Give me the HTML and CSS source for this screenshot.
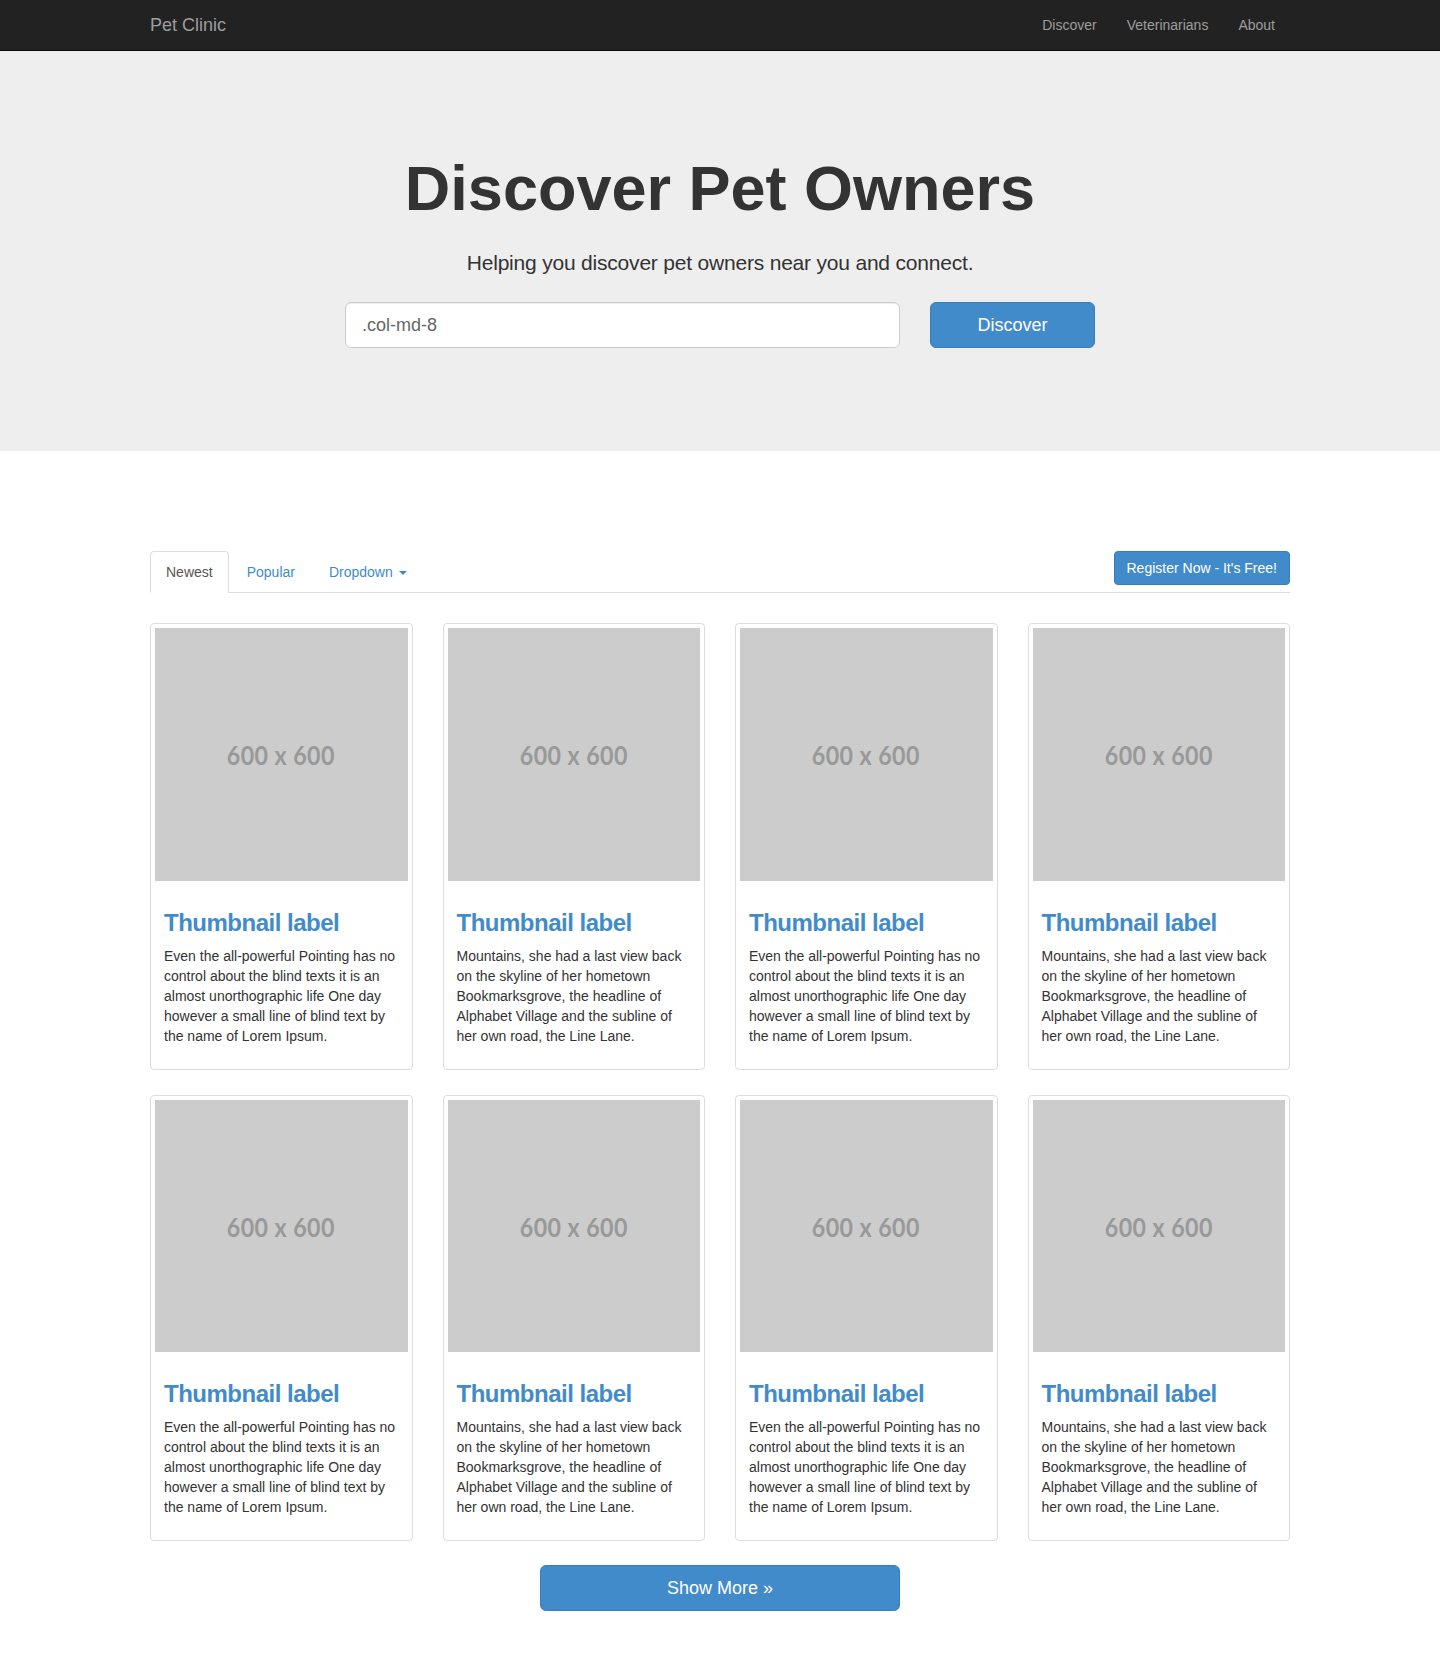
FILE: index.html
```html
<!DOCTYPE html>
<html lang="en">
<head>
<meta charset="utf-8">
<title>Pet Clinic</title>
<link rel="stylesheet" href="styles.css">
</head>
<body>
<nav class="navbar">
  <div class="container navbar-inner">
    <a class="brand" href="#">Pet Clinic</a>
    <ul class="nav-links">
      <li><a href="#">Discover</a></li>
      <li><a href="#">Veterinarians</a></li>
      <li><a href="#">About</a></li>
    </ul>
  </div>
</nav>

<header class="jumbotron">
  <div class="container hero">
    <h1 class="hero-title">Discover Pet Owners</h1>
    <p class="hero-lead">Helping you discover pet owners near you and connect.</p>
    <form class="hero-form">
      <input class="hero-input" type="text" placeholder=".col-md-8">
      <button class="btn btn-lg hero-btn" type="button">Discover</button>
    </form>
  </div>
</header>

<main class="container content">
  <div class="tabs-bar">
    <ul class="tabs">
      <li class="tab active"><a href="#">Newest</a></li>
      <li class="tab"><a href="#">Popular</a></li>
      <li class="tab"><a href="#">Dropdown <span class="caret"></span></a></li>
    </ul>
    <button class="btn btn-register" type="button">Register Now - It's Free!</button>
  </div>

  <div class="grid">
    <div class="thumb">
      <div class="ph"><span>600 x 600</span></div>
      <div class="caption">
        <h3>Thumbnail label</h3>
        <p>Even the all-powerful Pointing has no control about the blind texts it is an almost unorthographic life One day however a small line of blind text by the name of Lorem Ipsum.</p>
      </div>
    </div>
    <div class="thumb">
      <div class="ph"><span>600 x 600</span></div>
      <div class="caption">
        <h3>Thumbnail label</h3>
        <p>Mountains, she had a last view back on the skyline of her hometown Bookmarksgrove, the headline of Alphabet Village and the subline of her own road, the Line Lane.</p>
      </div>
    </div>
    <div class="thumb">
      <div class="ph"><span>600 x 600</span></div>
      <div class="caption">
        <h3>Thumbnail label</h3>
        <p>Even the all-powerful Pointing has no control about the blind texts it is an almost unorthographic life One day however a small line of blind text by the name of Lorem Ipsum.</p>
      </div>
    </div>
    <div class="thumb">
      <div class="ph"><span>600 x 600</span></div>
      <div class="caption">
        <h3>Thumbnail label</h3>
        <p>Mountains, she had a last view back on the skyline of her hometown Bookmarksgrove, the headline of Alphabet Village and the subline of her own road, the Line Lane.</p>
      </div>
    </div>
    <div class="thumb">
      <div class="ph"><span>600 x 600</span></div>
      <div class="caption">
        <h3>Thumbnail label</h3>
        <p>Even the all-powerful Pointing has no control about the blind texts it is an almost unorthographic life One day however a small line of blind text by the name of Lorem Ipsum.</p>
      </div>
    </div>
    <div class="thumb">
      <div class="ph"><span>600 x 600</span></div>
      <div class="caption">
        <h3>Thumbnail label</h3>
        <p>Mountains, she had a last view back on the skyline of her hometown Bookmarksgrove, the headline of Alphabet Village and the subline of her own road, the Line Lane.</p>
      </div>
    </div>
    <div class="thumb">
      <div class="ph"><span>600 x 600</span></div>
      <div class="caption">
        <h3>Thumbnail label</h3>
        <p>Even the all-powerful Pointing has no control about the blind texts it is an almost unorthographic life One day however a small line of blind text by the name of Lorem Ipsum.</p>
      </div>
    </div>
    <div class="thumb">
      <div class="ph"><span>600 x 600</span></div>
      <div class="caption">
        <h3>Thumbnail label</h3>
        <p>Mountains, she had a last view back on the skyline of her hometown Bookmarksgrove, the headline of Alphabet Village and the subline of her own road, the Line Lane.</p>
      </div>
    </div>
  </div>

  <div class="more-row">
    <button class="btn btn-lg btn-more" type="button">Show More &raquo;</button>
  </div>
</main>
</body>
</html>
```

FILE: styles.css
```css
* { box-sizing: border-box; }

html, body {
  margin: 0;
  padding: 0;
  background: #fff;
}

body {
  font-family: "Liberation Sans", Arial, sans-serif;
  font-size: 14px;
  line-height: 20px;
  color: #333;
}

a { text-decoration: none; }

.container {
  width: 1140px;
  margin: 0 auto;
}

/* Navbar */
.navbar {
  background: #222;
  border-bottom: 1px solid #080808;
  height: 51px;
}

.navbar-inner {
  display: flex;
  align-items: center;
  justify-content: space-between;
  height: 50px;
}

.brand {
  color: #9d9d9d;
  font-size: 18px;
  line-height: 20px;
}

.nav-links {
  list-style: none;
  margin: 0;
  padding: 0;
  display: flex;
}

.nav-links a {
  display: block;
  padding: 15px;
  line-height: 20px;
  color: #9d9d9d;
  font-size: 14px;
}

/* Jumbotron */
.jumbotron {
  background: #eee;
  padding: 103px 0 103px;
}

.hero {
  text-align: center;
}

.hero-title {
  margin: 0;
  font-size: 63px;
  line-height: 69px;
  font-weight: bold;
  color: #333;
}

.hero-lead {
  margin: 25px 0 0;
  font-size: 21px;
  line-height: 30px;
  color: #333;
  letter-spacing: -0.2px;
}

.hero-form {
  margin: 24px 0 0 195px;
  display: flex;
  gap: 30px;
}

.hero-input {
  width: 555px;
  height: 46px;
  padding: 10px 16px;
  font-family: inherit;
  font-size: 18px;
  color: #555;
  background: #fff;
  border: 1px solid #ccc;
  border-radius: 6px;
  box-shadow: inset 0 1px 1px rgba(0,0,0,0.075);
  outline: none;
}

.hero-input::placeholder {
  color: #666;
}

/* Buttons */
.btn {
  font-family: inherit;
  color: #fff;
  background: #428bca;
  border: 1px solid #357ebd;
  border-radius: 4px;
  cursor: pointer;
  font-size: 14px;
  line-height: 20px;
  padding: 6px 12px;
}

.btn-lg {
  font-size: 18px;
  line-height: 24px;
  padding: 10px 16px;
  border-radius: 6px;
  height: 46px;
}

.hero-btn {
  width: 165px;
}

/* Content */
.content {
  padding-top: 100px;
  padding-bottom: 60px;
}

.tabs-bar {
  display: flex;
  justify-content: space-between;
  align-items: flex-start;
  border-bottom: 1px solid #ddd;
}

.tabs {
  list-style: none;
  margin: 0 0 -1px;
  padding: 0;
  display: flex;
}

.tab {
  margin-right: 2px;
}

.tab a {
  display: block;
  padding: 10px 15px;
  line-height: 20px;
  border: 1px solid transparent;
  border-radius: 4px 4px 0 0;
  color: #428bca;
}

.tab.active a {
  color: #555;
  background: #fff;
  border-color: #ddd #ddd transparent;
}

.caret {
  display: inline-block;
  width: 0;
  height: 0;
  margin-left: 2px;
  vertical-align: middle;
  border-top: 4px solid #428bca;
  border-left: 4px solid transparent;
  border-right: 4px solid transparent;
}

.btn-register {
  height: 34px;
}

.grid {
  margin-top: 30px;
  display: grid;
  grid-template-columns: repeat(4, 1fr);
  column-gap: 30px;
  row-gap: 25px;
}

.thumb {
  padding: 4px;
  border: 1px solid #ddd;
  border-radius: 4px;
  background: #fff;
}

.ph {
  aspect-ratio: 1 / 1;
  background: #ccc;
  display: flex;
  align-items: center;
  justify-content: center;
  padding-top: 2px;
}

.ph span {
  font-family: "Lato", "Open Sans", sans-serif;
  font-weight: bold;
  font-size: 27px;
  color: #999;
  transform: scaleX(0.86);
  letter-spacing: 0.5px;
}

.caption {
  padding: 9px;
}

.caption h3 {
  margin: 20px 0 10px;
  font-size: 24px;
  line-height: 26px;
  font-weight: bold;
  letter-spacing: -0.5px;
  color: #428bca;
}

.caption p {
  margin: 0 0 10px;
}

.more-row {
  margin-top: 24px;
  padding-left: 390px;
}

.btn-more {
  width: 360px;
}
```
